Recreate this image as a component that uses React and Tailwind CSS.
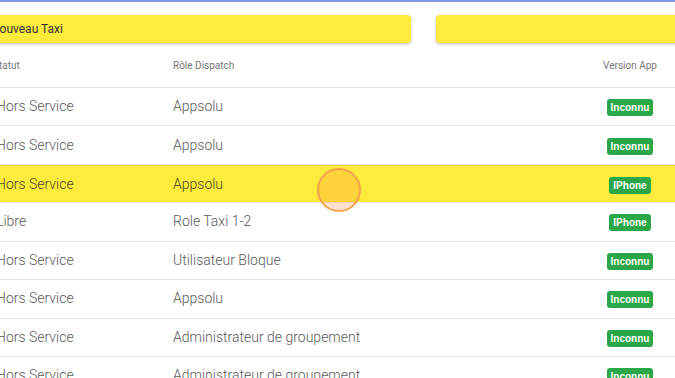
const ROWS = [
  { statut: 'Hors Service', role: 'Appsolu', version: 'Inconnu' },
  { statut: 'Hors Service', role: 'Appsolu', version: 'Inconnu' },
  { statut: 'Hors Service', role: 'Appsolu', version: 'IPhone', active: true },
  { statut: 'Libre', role: 'Role Taxi 1-2', version: 'IPhone' },
  { statut: 'Hors Service', role: 'Utilisateur Bloque', version: 'Inconnu' },
  { statut: 'Hors Service', role: 'Appsolu', version: 'Inconnu' },
  { statut: 'Hors Service', role: 'Administrateur de groupement', version: 'Inconnu' },
  { statut: 'Hors Service', role: 'Administrateur de groupement', version: 'Inconnu' },
]

function Badge({ children }) {
  return (
    <span
      className="inline-block rounded-[3px] bg-[#2aa748] px-[4px] h-[17px] leading-[17px] text-[10px] font-bold text-white"
      style={{ fontFamily: '"Liberation Sans", Arial, sans-serif' }}
    >
      {children}
    </span>
  )
}

export default function App() {
  return (
    <div
      className="relative w-[675px] h-[378px] overflow-hidden bg-white"
      style={{ fontFamily: 'Roboto, "Noto Sans", sans-serif' }}
    >
      <div className="h-[2px] bg-[#7d9be0]" />

      {/* action buttons */}
      <div className="mt-[13px] flex gap-[25px] ml-[-30px]">
        <button className="w-[441px] h-[28px] shrink-0 rounded-[4px] bg-[#ffeb3b] shadow-[0_1px_3px_rgba(0,0,0,0.3)] pl-[21px] text-left text-[12px] text-[#333]">
          Nouveau Taxi
        </button>
        <button className="w-[300px] h-[28px] shrink-0 rounded-[4px] bg-[#ffeb3b] shadow-[0_1px_3px_rgba(0,0,0,0.3)]" />
      </div>

      {/* table */}
      <div className="ml-[-4px] w-[679px]">
        <div className="grid grid-cols-[177px_1fr_90px] h-[45px] items-center border-b border-[#e3e3e3] text-[10px] text-[#777]">
          <div className="ml-[-3px]">Statut</div>
          <div>Rôle Dispatch</div>
          <div className="text-center">Version App</div>
        </div>
        {ROWS.map((r, i) => (
          <div
            key={i}
            className={
              'grid grid-cols-[177px_1fr_90px] h-[38.43px] items-center border-b border-[#e3e3e3] text-[14px] font-light ' +
              (r.active ? 'bg-[#ffeb3b] text-[#4a4a2a] border-t border-t-[#f2d93a]' : 'text-[#5a5a5a]')
            }
          >
            <div className="whitespace-nowrap">{r.statut}</div>
            <div className="whitespace-nowrap">{r.role}</div>
            <div className="text-center">
              <Badge>{r.version}</Badge>
            </div>
          </div>
        ))}
      </div>

      {/* touch cursor */}
      <div className="absolute left-[317px] top-[168px] w-[44px] h-[44px] rounded-full border-2 border-[#f7a04a] bg-[rgba(255,140,60,0.25)]" />
    </div>
  )
}
